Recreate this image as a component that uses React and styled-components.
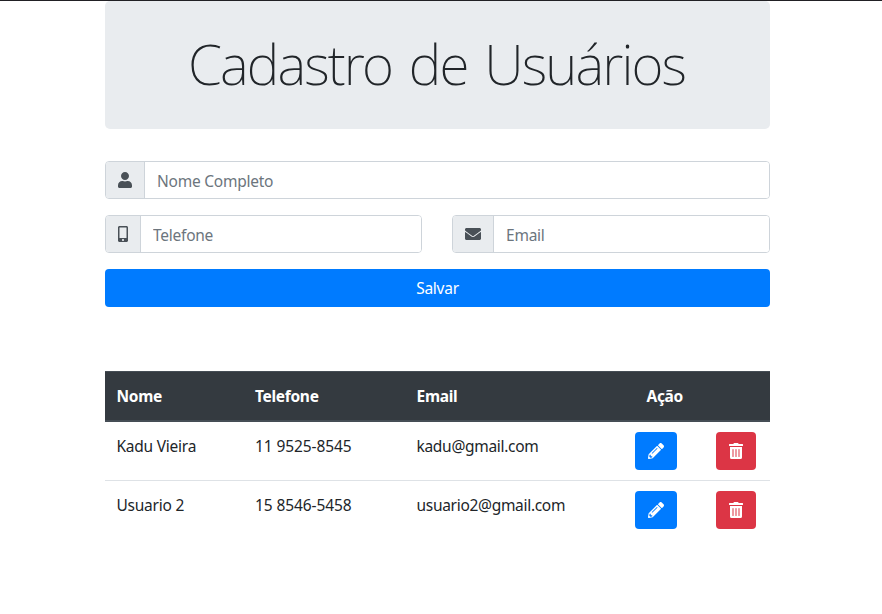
import React from "react";
import styled, { createGlobalStyle } from "styled-components";
import { FaUser, FaMobileAlt, FaEnvelope, FaPencilAlt, FaTrashAlt } from "react-icons/fa";

const GlobalStyle = createGlobalStyle`
  *, *::before, *::after { box-sizing: border-box; }
  body {
    margin: 0;
    background: #fff;
    color: #212529;
    font-family: "Segoe UI", "Noto Sans", "Liberation Sans", sans-serif;
    font-size: 15.5px;
    line-height: 24px;
    letter-spacing: -0.24px;
  }
`;

const Page = styled.div`
  height: 614px;
  overflow: hidden;
  border-top: 1px solid #212024;
`;

const Container = styled.main`
  width: 665px;
  margin-left: 105px;
`;

const Jumbotron = styled.header`
  display: flex;
  align-items: center;
  justify-content: center;
  height: 128px;
  padding: 0 2px 3px 0;
  border-radius: 5px;
  background: #e9ecef;
`;

const Title = styled.h1`
  margin: 0;
  font-size: 55px;
  font-weight: 200;
  line-height: 68px;
  letter-spacing: -1.9px;
  word-spacing: 4.5px;
  white-space: nowrap;
`;

const Form = styled.form`
  display: grid;
  grid-template-columns: 317px 318px;
  gap: 16px 30px;
  margin-top: 32px;
`;

const InputGroup = styled.label`
  display: flex;
  height: 38px;
  grid-column: ${(p) => (p.$wide ? "1 / -1" : "auto")};
  border: 1px solid #ced4da;
  border-radius: 4px;
  overflow: hidden;
`;

const Prefix = styled.span`
  display: flex;
  align-items: center;
  flex: none;
  padding: 0 12.5px 0 11.5px;
  border-right: 1px solid #ced4da;
  background: #e9ecef;
  color: #495057;
  svg { display: block; height: 16px; width: ${(p) => p.$icon}px; }
`;

const Input = styled.input`
  flex: 1;
  min-width: 0;
  padding: 1px 12px 0;
  border: 0;
  outline: 0;
  background: #fff;
  color: #495057;
  font: inherit;
  letter-spacing: inherit;
  &::placeholder { color: #6c757d; opacity: 1; }
`;

const SaveButton = styled.button`
  grid-column: 1 / -1;
  height: 38px;
  padding: 0 0 1px;
  border: 0;
  border-radius: 4px;
  background: #007bff;
  color: #fff;
  font: inherit;
  letter-spacing: inherit;
`;

const Table = styled.div`
  margin-top: 64px;
`;

const Row = styled.div`
  display: grid;
  grid-template-columns: 138.5px 161.5px 218.5px 81px 1fr;
  height: ${(p) => (p.$first ? 58 : 59)}px;
  padding: 10px 0 0 11.5px;
  border-top: ${(p) => (p.$first ? "0" : "1px solid #dee2e6")};
`;

const HeadRow = styled(Row)`
  height: 51px;
  padding-top: 12px;
  border-top: 1px solid #454d55;
  border-bottom: 2px solid #454d55;
  background: #343a40;
  color: #fff;
  font-weight: 700;
  letter-spacing: -0.3px;
`;

const Cell = styled.span`
  padding-top: ${(p) => (p.$head ? 0 : 2)}px;
  padding-left: ${(p) => p.$indent || 0}px;
  letter-spacing: ${(p) => (p.$track ? `${p.$track}px` : "inherit")};
  white-space: nowrap;
`;

const ActionButton = styled.button`
  display: flex;
  align-items: center;
  justify-content: center;
  width: ${(p) => (p.$danger ? 40 : 42)}px;
  height: 38px;
  padding: 0;
  border: 0;
  border-radius: 4px;
  background: ${(p) => (p.$danger ? "#dc3545" : "#007bff")};
  color: #fff;
  svg { display: block; width: ${(p) => (p.$danger ? 14 : 16)}px; height: 16px; }
`;

const users = [
  { name: "Kadu Vieira", phone: "11 9525-8545", email: "kadu@gmail.com" },
  { name: "Usuario 2", phone: "15 8546-5458", email: "usuario2@gmail.com" },
];

export default function App() {
  return (
    <Page>
      <GlobalStyle />
      <Container>
        <Jumbotron>
          <Title>Cadastro de Usuários</Title>
        </Jumbotron>
        <Form onSubmit={(e) => e.preventDefault()}>
          <InputGroup $wide>
            <Prefix $icon={14}><FaUser /></Prefix>
            <Input placeholder="Nome Completo" />
          </InputGroup>
          <InputGroup>
            <Prefix $icon={10}><FaMobileAlt /></Prefix>
            <Input placeholder="Telefone" />
          </InputGroup>
          <InputGroup>
            <Prefix $icon={16}><FaEnvelope /></Prefix>
            <Input placeholder="Email" />
          </InputGroup>
          <SaveButton type="submit">Salvar</SaveButton>
        </Form>
        <Table>
          <HeadRow>
            <Cell $head>Nome</Cell>
            <Cell $head>Telefone</Cell>
            <Cell $head>Email</Cell>
            <Cell $head $indent={11.5}>Ação</Cell>
          </HeadRow>
          {users.map((u, i) => (
            <Row key={u.name} $first={i === 0}>
              <Cell>{u.name}</Cell>
              <Cell $track={-0.1}>{u.phone}</Cell>
              <Cell $track={-0.3}>{u.email}</Cell>
              <ActionButton type="button"><FaPencilAlt /></ActionButton>
              <ActionButton type="button" $danger><FaTrashAlt /></ActionButton>
            </Row>
          ))}
        </Table>
      </Container>
    </Page>
  );
}
